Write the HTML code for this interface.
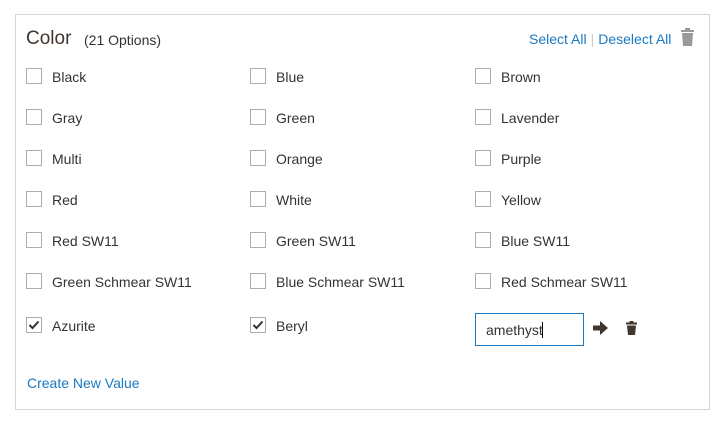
<!DOCTYPE html>
<html><head><style>
*{box-sizing:border-box;margin:0;padding:0}
body{width:727px;height:423px;background:#fff;font-family:"Liberation Sans",sans-serif;color:#333;position:relative;overflow:hidden}
.box{position:absolute;left:15px;top:14px;width:695px;height:396px;border:1px solid #d6d6d6}
.t{position:absolute;white-space:nowrap}
.cb{position:absolute;width:16px;height:16px;border:1px solid #adadad;background:#fff}
.lbl{position:absolute;font-size:14px;line-height:16px;white-space:nowrap}
a{color:#1979c3;text-decoration:none}
</style></head><body>
<div class="box"></div>
<div class="t" style="left:26px;top:28px;font-size:19px;color:#41362f">Color</div>
<div class="t" style="left:84px;top:32px;font-size:14px">(21 Options)</div>
<div class="t" style="left:529px;top:31px;font-size:14px"><a>Select All</a><span style="color:#ccc;margin:0 4px">|</span><a>Deselect All</a></div>
<svg class="t" style="left:681px;top:28px" width="13" height="18" viewBox="0 0 13 18"><rect x="0" y="2" width="13" height="2" fill="#999"/><rect x="4" y="0" width="5" height="3" fill="#999"/><path d="M1 5h11l-1 13H2z" fill="#999"/></svg>
<div id="g"></div>
<div class="t" style="left:475px;top:313px;width:109px;height:33px;border:1px solid #1979c3;font-size:14px;padding:8px 0 0 10px">amethyst<span style="border-left:1px solid #000;margin-left:-1px"></span></div>
<svg class="t" style="left:593px;top:321px" width="15" height="14" viewBox="0 0 15 14"><path d="M0 4.5h7V0l8 7-8 7V9.5H0z" fill="#41362f"/></svg>
<svg class="t" style="left:626px;top:321px" width="11" height="14" viewBox="0 0 11 14"><rect x="0" y="1.5" width="11" height="2" fill="#41362f"/><rect x="3.5" y="0" width="4" height="2" fill="#41362f"/><path d="M1 4.5h9l-1 9.5H2z" fill="#41362f"/></svg>
<div class="t" style="left:27px;top:375px;font-size:14px"><a>Create New Value</a></div>
<script>
var rows=[["Black","Blue","Brown"],["Gray","Green","Lavender"],["Multi","Orange","Purple"],["Red","White","Yellow"],["Red SW11","Green SW11","Blue SW11"],["Green Schmear SW11","Blue Schmear SW11","Red Schmear SW11"],["Azurite","Beryl",null]];
var ys=[76,117,158,199,240,281,325],xs=[26,250,475],h="";
rows.forEach(function(r,i){r.forEach(function(l,j){if(!l)return;var y=ys[i];
h+='<div class="cb" style="left:'+xs[j]+'px;top:'+(y-8)+'px">'+(i==6?'<svg width="14" height="14" viewBox="0 0 14 14" style="position:absolute;left:0;top:0"><path d="M2.5 7l3 3 6-6.5" stroke="#333" stroke-width="2" fill="none"/></svg>':'')+'</div>';
h+='<div class="lbl" style="left:'+(xs[j]+26)+'px;top:'+(y-7)+'px">'+l+'</div>';});});
document.getElementById("g").innerHTML=h;
</script>
</body></html>
